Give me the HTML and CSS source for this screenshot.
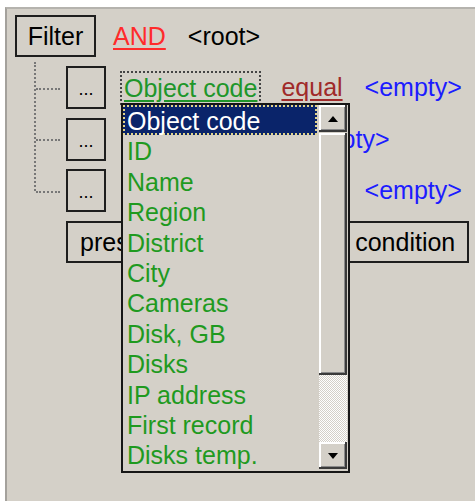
FILE: index.html
```html
<!DOCTYPE html>
<html lang="en">
<head>
    <meta charset="UTF-8">
    <title>Filter</title>
    <link rel="stylesheet" href="styles.css">
</head>
<body>

    <div class="panel">
        <div class="head">
            <button class="box filter">Filter</button>
            <span class="and">AND</span>
            <span class="node">&lt;root&gt;</span>
        </div>

        <!-- conditions of the root group -->
        <div class="branches">
            <div class="cond">
                <button class="box more">...</button>
                <span class="field focus">Object code</span>
                <span class="op">equal</span>
                <span class="val">&lt;empty&gt;</span>
            </div>
            <div class="cond">
                <button class="box more">...</button>
                <span class="field">Disks</span>
                <span class="op">equal</span>
                <span class="val">&lt;empty&gt;</span>
            </div>
            <div class="cond">
                <button class="box more">...</button>
                <span class="field">Object code</span>
                <span class="op">equal</span>
                <span class="val">&lt;empty&gt;</span>
            </div>
        </div>

        <button class="box add">press here to add a new condition</button>

        <!-- open field list of the first condition -->
        <div class="dropdown">
            <ul class="items">
                <li class="sel">Object code</li>
                <li>ID</li>
                <li>Name</li>
                <li>Region</li>
                <li>District</li>
                <li>City</li>
                <li>Cameras</li>
                <li>Disk, GB</li>
                <li>Disks</li>
                <li>IP address</li>
                <li>First record</li>
                <li>Disks temp.</li>
            </ul>
            <div class="scroll">
                <div class="sbtn up"></div>
                <div class="thumb"></div>
                <div class="track"></div>
                <div class="sbtn down"></div>
            </div>
        </div>
    </div>

</body>
</html>
```

FILE: styles.css
```css
body {
    margin: 0;
    background-color: #fff;
    font-family: "Liberation Sans", Arial, sans-serif;
    font-size: 25px;
    overflow: hidden;
}
.panel {
    position: relative;
    box-sizing: border-box;
    height: 494px;
    margin: 7px 0 0 5px;
    padding: 6px 0 0 8px;
    background-color: #d4d0c8;
    border-left: 2px solid #a4a19c;
    border-top: 2px solid #b5b3ae;
}
.head {
    display: flex;
    align-items: center;
}
.box {
    box-sizing: border-box;
    padding: 0;
    font: inherit;
    color: #000;
    background-color: #d4d0c8;
    border: 2px solid #1e1e1e;
}
.filter {
    width: 81px;
    height: 42px;
}
.and {
    margin-left: 17px;
    color: #ff2b2b;
    text-decoration: underline;
    text-underline-offset: 3px;
}
.node {
    margin-left: 22px;
}
.branches {
    position: relative;
    display: flex;
    flex-direction: column;
    gap: 8.5px;
    margin-top: 9px;
    padding-left: 51px;
}
.branches::before {
    content: "";
    position: absolute;
    left: 19px;
    top: -4px;
    bottom: 21px;
    border-left: 2px dotted #777;
}
.cond {
    position: relative;
    display: flex;
    align-items: center;
    height: 43px;
}
.cond::before {
    content: "";
    position: absolute;
    left: -30px;
    top: 50%;
    width: 24px;
    border-top: 2px dotted #777;
}
.more {
    width: 40px;
    height: 43px;
    padding-top: 4px;
    font-size: 18px;
}
.field {
    margin-left: 14px;
    padding: 0 2px;
    line-height: 30px;
    color: #20962a;
    border: 2px dotted transparent;
    text-decoration: underline;
    text-underline-offset: 3px;
}
.focus {
    border-color: #444;
}
.op {
    margin-left: 20px;
    color: #a02a2a;
    text-decoration: underline;
    text-underline-offset: 3px;
}
.val {
    margin-left: 22px;
    color: #1c1cff;
}
.add {
    display: block;
    width: 403px;
    height: 42px;
    margin: 9px 0 0 51px;
    padding-left: 12px;
    text-align: left;
    white-space: nowrap;
}
.dropdown {
    position: absolute;
    left: 114px;
    top: 94px;
    box-sizing: border-box;
    width: 229px;
    height: 370px;
    display: flex;
    gap: 2px;
    padding-right: 1px;
    background-color: #d4d0c8;
    border: 2px solid #161616;
}
.items {
    width: 194px;
    margin: 0;
    padding: 0;
    list-style: none;
    overflow: hidden;
}
.items li {
    box-sizing: border-box;
    height: 30.4px;
    padding: 2px 0 0 2px;
    line-height: 24.4px;
    color: #1f9a1f;
    white-space: nowrap;
    border: 2px solid transparent;
}
.items .sel {
    color: #fff;
    background-color: #0a246a;
    border: 2px dotted #e2d48a;
}
.scroll {
    width: 28px;
    display: flex;
    flex-direction: column;
}
.sbtn, .thumb {
    background-color: #d4d0c8;
    box-shadow: inset -2px -2px #3a3a3a, inset 2px 2px #fff, inset -3px -3px #8a8a8a;
}
.sbtn {
    height: 27px;
    display: flex;
    align-items: center;
    justify-content: center;
}
.up::before {
    content: "";
    border-left: 5px solid transparent;
    border-right: 5px solid transparent;
    border-bottom: 6px solid #000;
}
.down {
    margin-bottom: 2px;
}
.down::before {
    content: "";
    border-left: 5px solid transparent;
    border-right: 5px solid transparent;
    border-top: 6px solid #000;
}
.thumb {
    height: 242px;
    margin-top: 1px;
}
.track {
    flex: 1;
    background-image: conic-gradient(#fff 25%, #d4d0c8 0 50%, #fff 0 75%, #d4d0c8 0);
    background-size: 2px 2px;
}
```
